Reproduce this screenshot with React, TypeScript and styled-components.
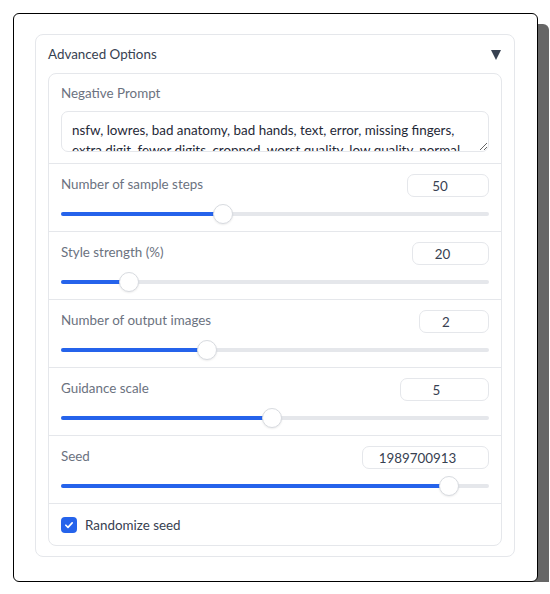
import styled, { createGlobalStyle } from 'styled-components';

const GlobalStyle = createGlobalStyle`
  html, body {
    margin: 0;
    padding: 0;
    background: #ffffff;
  }
  body {
    font-family: Lato, "Noto Sans", sans-serif;
    -webkit-font-smoothing: antialiased;
  }
`;

const negativePrompt =
  'nsfw, lowres, bad anatomy, bad hands, text, error, missing fingers, extra digit, fewer digits, cropped, worst quality, low quality, normal quality, jpeg artifacts, signature, watermark, username, blurry';

const sliders = [
  { key: 'steps', label: 'Number of sample steps', value: '50', inputWidth: 82, pct: 0.3785 },
  { key: 'style', label: 'Style strength (%)', value: '20', inputWidth: 77, pct: 0.159 },
  { key: 'images', label: 'Number of output images', value: '2', inputWidth: 70, pct: 0.341 },
  { key: 'guidance', label: 'Guidance scale', value: '5', inputWidth: 89, pct: 0.493 },
  { key: 'seed', label: 'Seed', value: '1989700913', inputWidth: 127, pct: 0.907 },
];

export default function App() {
  return (
    <>
      <GlobalStyle />
      <Page>
        <Frame>
          <Accordion>
            <AccordionHeader>
              <AccordionTitle>Advanced Options</AccordionTitle>
              <Caret />
            </AccordionHeader>
            <Block>
              <PromptSection>
                <Label>Negative Prompt</Label>
                <PromptArea readOnly rows={2} value={negativePrompt} />
              </PromptSection>
              {sliders.map(item => (
                <SliderSection key={item.key}>
                  <SliderHead>
                    <Label>{item.label}</Label>
                    <NumberBox $width={item.inputWidth}>{item.value}</NumberBox>
                  </SliderHead>
                  <Track>
                    <Fill style={{ width: `${item.pct * 100}%` }}>
                      <Thumb />
                    </Fill>
                  </Track>
                </SliderSection>
              ))}
              <CheckSection>
                <CheckBox>
                  <svg width="10" height="10" viewBox="0 0 12 12" fill="none">
                    <path
                      d="M2.2 6.3 4.8 8.8 9.8 3.4"
                      stroke="#ffffff"
                      strokeWidth="2"
                      strokeLinecap="round"
                      strokeLinejoin="round"
                    />
                  </svg>
                </CheckBox>
                <CheckLabel>Randomize seed</CheckLabel>
              </CheckSection>
            </Block>
          </Accordion>
        </Frame>
      </Page>
    </>
  );
}

const Page = styled.div`
  padding: 13px 0 0 13px;
`;

const Frame = styled.div`
  box-sizing: border-box;
  width: 525px;
  height: 569px;
  border: 1px solid #000000;
  border-radius: 6px;
  background: #ffffff;
  box-shadow: 11px 11px 0 #666666;
  padding: 20px 22px 0 21px;
`;

const Accordion = styled.div`
  border: 1px solid #e5e7eb;
  border-radius: 8px;
  padding: 0 12px 10px 12px;
`;

const AccordionHeader = styled.div`
  display: flex;
  align-items: center;
  justify-content: space-between;
  height: 38px;
`;

const AccordionTitle = styled.span`
  font-size: 13.4px;
  color: #374151;
  margin-top: -1px;
`;

const Caret = styled.span`
  width: 0;
  height: 0;
  margin-right: 1px;
  margin-top: 1px;
  border-left: 5.5px solid transparent;
  border-right: 5.5px solid transparent;
  border-top: 10px solid #374151;
`;

const Block = styled.div`
  border: 1px solid #e5e7eb;
  border-radius: 8px;
  background: #ffffff;
  display: flex;
  flex-direction: column;

  & > * + * {
    border-top: 1px solid #e5e7eb;
  }
`;

const Label = styled.span`
  font-size: 13.4px;
  line-height: 20px;
  color: #6b7280;
`;

const PromptSection = styled.div`
  display: flex;
  flex-direction: column;
  gap: 8px;
  padding: 9px 12px 11px 12px;
`;

const PromptArea = styled.textarea`
  box-sizing: border-box;
  width: 100%;
  height: 41px;
  margin: 0;
  padding: 8px 10px;
  border: 1px solid #e5e7eb;
  border-radius: 7px;
  font-family: Lato, "Noto Sans", sans-serif;
  font-size: 13.4px;
  line-height: 20px;
  color: #1f2937;
  background: #ffffff;
  resize: vertical;
  overflow: hidden;
  outline: none;
`;

const SliderSection = styled.div`
  display: flex;
  flex-direction: column;
  gap: 7px;
  padding: 10px 12px 7px 12px;
`;

const SliderHead = styled.div`
  display: flex;
  align-items: flex-start;
  justify-content: space-between;
  height: 23px;
`;

const NumberBox = styled.div<{ $width: number }>`
  box-sizing: border-box;
  width: ${props => props.$width}px;
  height: 23px;
  padding-right: 16px;
  border: 1px solid #e5e7eb;
  border-radius: 7px;
  display: flex;
  align-items: center;
  justify-content: center;
  font-size: 13.4px;
  color: #374151;
`;

const Track = styled.div`
  position: relative;
  height: 4px;
  margin: 8px 0;
  border-radius: 2px;
  background: #e5e7eb;
`;

const Fill = styled.div`
  position: relative;
  height: 100%;
  border-radius: 2px;
  background: #2563eb;
`;

const Thumb = styled.div`
  position: absolute;
  right: -10px;
  top: 50%;
  box-sizing: border-box;
  width: 20px;
  height: 20px;
  margin-top: -10px;
  border-radius: 50%;
  border: 1px solid #d8dbe0;
  background: #ffffff;
  box-shadow: 0 1px 2px rgba(0, 0, 0, 0.08);
`;

const CheckSection = styled.div`
  display: flex;
  align-items: center;
  gap: 8px;
  padding: 13px 12px 12px 12px;
`;

const CheckBox = styled.span`
  display: flex;
  align-items: center;
  justify-content: center;
  width: 16px;
  height: 16px;
  border-radius: 4px;
  background: #2563eb;
`;

const CheckLabel = styled.span`
  font-size: 13.4px;
  line-height: 16px;
  color: #374151;
`;
